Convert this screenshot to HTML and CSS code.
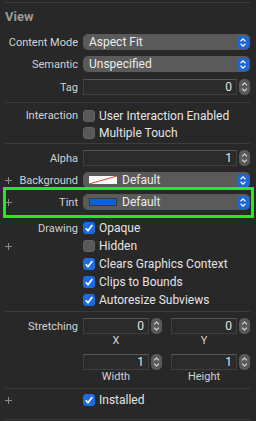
FILE: index.html
```html
<!DOCTYPE html>
<html lang="en">
<head>
  <meta charset="UTF-8">
  <meta name="viewport" content="width=device-width, initial-scale=1.0">
  <title>View Inspector</title>
  <link rel="stylesheet" href="styles.css">
</head>
<body>
  <div class="panel">
    <div class="sep"></div>

    <section class="sec sec-view">
      <div class="title">View</div>
      <div class="stack">
        <div class="row">
          <div class="label">Content Mode</div>
          <div class="popup">
            <span class="popup-text">Aspect Fit</span>
            <span class="popup-arrows"><svg width="12" height="13" viewBox="0 0 12 13"><path d="M3.6 5.2 L6 2.9 L8.4 5.2 M3.6 7.8 L6 10.1 L8.4 7.8" fill="none" stroke="#fff" stroke-width="1.2"/></svg></span>
          </div>
        </div>
        <div class="row">
          <div class="label">Semantic</div>
          <div class="popup">
            <span class="popup-text">Unspecified</span>
            <span class="popup-arrows"><svg width="12" height="13" viewBox="0 0 12 13"><path d="M3.6 5.2 L6 2.9 L8.4 5.2 M3.6 7.8 L6 10.1 L8.4 7.8" fill="none" stroke="#fff" stroke-width="1.2"/></svg></span>
          </div>
        </div>
        <div class="row row-tag">
          <div class="label">Tag</div>
          <div class="field-group">
            <div class="field">0</div>
            <span class="stepper"><svg width="11" height="16" viewBox="0 0 11 16"><path d="M3 6.4 L5.5 4 L8 6.4 M3 9.6 L5.5 12 L8 9.6" fill="none" stroke="#d8d8d8" stroke-width="1.1"/></svg></span>
          </div>
        </div>
      </div>
    </section>

    <div class="sep"></div>

    <section class="sec sec-interaction">
      <div class="row check-row">
        <div class="label">Interaction</div>
        <label class="check"><span class="box"></span>User Interaction Enabled</label>
      </div>
      <div class="row check-row">
        <div class="label"></div>
        <label class="check"><span class="box"></span>Multiple Touch</label>
      </div>
    </section>

    <div class="sep"></div>

    <section class="sec sec-look">
      <div class="stack">
        <div class="row">
          <div class="label">Alpha</div>
          <div class="field-group">
            <div class="field">1</div>
            <span class="stepper"><svg width="11" height="16" viewBox="0 0 11 16"><path d="M3 6.4 L5.5 4 L8 6.4 M3 9.6 L5.5 12 L8 9.6" fill="none" stroke="#d8d8d8" stroke-width="1.1"/></svg></span>
          </div>
        </div>
        <div class="row">
          <div class="label"><span class="plus"><svg width="7" height="7" viewBox="0 0 7 7"><path d="M3.5 0 V7 M0 3.5 H7" stroke="#8c8c8c" stroke-width="1"/></svg></span>Background</div>
          <div class="popup">
            <span class="well well-none"><svg width="28" height="8" viewBox="0 0 28 8"><path d="M0 8 L28 0" stroke="#e8383a" stroke-width="1"/></svg></span>
            <span class="popup-text">Default</span>
            <span class="popup-arrows"><svg width="12" height="13" viewBox="0 0 12 13"><path d="M3.6 5.2 L6 2.9 L8.4 5.2 M3.6 7.8 L6 10.1 L8.4 7.8" fill="none" stroke="#fff" stroke-width="1.2"/></svg></span>
          </div>
        </div>
        <div class="row row-tint">
          <div class="label"><span class="plus"><svg width="7" height="7" viewBox="0 0 7 7"><path d="M3.5 0 V7 M0 3.5 H7" stroke="#8c8c8c" stroke-width="1"/></svg></span>Tint</div>
          <div class="popup">
            <span class="well well-blue"></span>
            <span class="popup-text">Default</span>
            <span class="popup-arrows"><svg width="12" height="13" viewBox="0 0 12 13"><path d="M3.6 5.2 L6 2.9 L8.4 5.2 M3.6 7.8 L6 10.1 L8.4 7.8" fill="none" stroke="#fff" stroke-width="1.2"/></svg></span>
          </div>
          <div class="highlight"></div>
        </div>
      </div>

      <div class="drawing">
        <div class="row draw-row">
          <div class="label">Drawing</div>
          <label class="check"><span class="box on"><svg width="12" height="12" viewBox="0 0 12 12"><path d="M2.8 6.3 L5 8.7 L9.3 2.9" fill="none" stroke="#fff" stroke-width="1.7"/></svg></span>Opaque</label>
        </div>
        <div class="row draw-row">
          <div class="label"><span class="plus"><svg width="7" height="7" viewBox="0 0 7 7"><path d="M3.5 0 V7 M0 3.5 H7" stroke="#8c8c8c" stroke-width="1"/></svg></span></div>
          <label class="check"><span class="box"></span>Hidden</label>
        </div>
        <div class="row draw-row">
          <div class="label"></div>
          <label class="check"><span class="box on"><svg width="12" height="12" viewBox="0 0 12 12"><path d="M2.8 6.3 L5 8.7 L9.3 2.9" fill="none" stroke="#fff" stroke-width="1.7"/></svg></span>Clears Graphics Context</label>
        </div>
        <div class="row draw-row">
          <div class="label"></div>
          <label class="check"><span class="box on"><svg width="12" height="12" viewBox="0 0 12 12"><path d="M2.8 6.3 L5 8.7 L9.3 2.9" fill="none" stroke="#fff" stroke-width="1.7"/></svg></span>Clips to Bounds</label>
        </div>
        <div class="row draw-row">
          <div class="label"></div>
          <label class="check"><span class="box on"><svg width="12" height="12" viewBox="0 0 12 12"><path d="M2.8 6.3 L5 8.7 L9.3 2.9" fill="none" stroke="#fff" stroke-width="1.7"/></svg></span>Autoresize Subviews</label>
        </div>
      </div>
    </section>

    <div class="sep"></div>

    <section class="sec sec-stretch">
      <div class="row">
        <div class="label">Stretching</div>
        <div class="pair">
          <div class="field-group">
            <div class="field">0</div>
            <span class="stepper"><svg width="11" height="16" viewBox="0 0 11 16"><path d="M3 6.4 L5.5 4 L8 6.4 M3 9.6 L5.5 12 L8 9.6" fill="none" stroke="#d8d8d8" stroke-width="1.1"/></svg></span>
          </div>
          <div class="field-group">
            <div class="field">0</div>
            <span class="stepper"><svg width="11" height="16" viewBox="0 0 11 16"><path d="M3 6.4 L5.5 4 L8 6.4 M3 9.6 L5.5 12 L8 9.6" fill="none" stroke="#d8d8d8" stroke-width="1.1"/></svg></span>
          </div>
        </div>
      </div>
      <div class="row caption-row">
        <div class="label"></div>
        <div class="pair">
          <div class="caption">X</div>
          <div class="caption">Y</div>
        </div>
      </div>
      <div class="row row-size">
        <div class="label"></div>
        <div class="pair">
          <div class="field-group">
            <div class="field">1</div>
            <span class="stepper"><svg width="11" height="16" viewBox="0 0 11 16"><path d="M3 6.4 L5.5 4 L8 6.4 M3 9.6 L5.5 12 L8 9.6" fill="none" stroke="#d8d8d8" stroke-width="1.1"/></svg></span>
          </div>
          <div class="field-group">
            <div class="field">1</div>
            <span class="stepper"><svg width="11" height="16" viewBox="0 0 11 16"><path d="M3 6.4 L5.5 4 L8 6.4 M3 9.6 L5.5 12 L8 9.6" fill="none" stroke="#d8d8d8" stroke-width="1.1"/></svg></span>
          </div>
        </div>
      </div>
      <div class="row caption-row">
        <div class="label"></div>
        <div class="pair">
          <div class="caption">Width</div>
          <div class="caption">Height</div>
        </div>
      </div>
    </section>

    <div class="sep"></div>

    <section class="sec sec-installed">
      <div class="row draw-row">
        <div class="label"><span class="plus"><svg width="7" height="7" viewBox="0 0 7 7"><path d="M3.5 0 V7 M0 3.5 H7" stroke="#8c8c8c" stroke-width="1"/></svg></span></div>
        <label class="check"><span class="box on"><svg width="12" height="12" viewBox="0 0 12 12"><path d="M2.8 6.3 L5 8.7 L9.3 2.9" fill="none" stroke="#fff" stroke-width="1.7"/></svg></span>Installed</label>
      </div>
    </section>

    <div class="sep"></div>
  </div>
</body>
</html>
```

FILE: styles.css
```css
body {
  margin: 0;
  background-color: #282828;
  font-family: Roboto, 'Noto Sans', sans-serif;
  font-size: 11px;
  color: #d6d6d6;
}
.panel {
  width: 256px;
  height: 421px;
  box-sizing: border-box;
  padding: 2px 6px 0 5px;
  overflow: hidden;
}
.sep {
  height: 1px;
  background-color: #3c3c3c;
}
.title {
  height: 27px;
  margin-bottom: 4px;
  display: flex;
  align-items: center;
  font-size: 13px;
  font-weight: 700;
  color: #9a9a9a;
}
.stack {
  display: flex;
  flex-direction: column;
  gap: 6px;
}
.sec-view {
  padding-bottom: 7px;
}
.row-tag {
  margin-top: 1px;
}
.sec-interaction {
  padding: 4px 0 2px;
}
.sec-look {
  padding: 6px 0 2px;
}
.sec-stretch {
  padding: 6px 0 6px;
}
.sec-installed {
  padding: 2px 0 10px;
}
.row {
  display: grid;
  grid-template-columns: 73px 1fr;
  column-gap: 5px;
  align-items: center;
  height: 16px;
}
.check-row {
  height: 17px;
}
.draw-row {
  height: 18px;
}
.drawing {
  margin-top: 9px;
}
.label {
  display: flex;
  align-items: center;
  justify-content: flex-end;
  white-space: nowrap;
  color: #d2d2d2;
}
.plus {
  display: flex;
  margin-right: auto;
}

/* popup buttons */
.popup {
  height: 16px;
  display: flex;
  align-items: center;
  padding: 0 1px 0 6px;
  border-radius: 5px;
  background-color: #5a5a5a;
  color: #ececec;
  font-size: 12px;
}
.popup-text {
  white-space: nowrap;
}
.popup-arrows {
  display: flex;
  margin-left: auto;
  width: 12px;
  height: 13px;
  border-radius: 4px;
  background-color: #1f67d9;
}
.well {
  display: flex;
  width: 28px;
  height: 8px;
  margin-right: 5px;
  box-sizing: border-box;
}
.well-none {
  background-color: #fafafa;
}
.well-blue {
  background-color: #0b63d3;
  border: 1px solid #3a3a3a;
}

/* text fields */
.field-group {
  display: flex;
  align-items: center;
  gap: 2px;
}
.field {
  flex: 1;
  height: 16px;
  box-sizing: border-box;
  padding-right: 4px;
  border: 1px solid #3f3f3f;
  border-top-color: #565656;
  background-color: #2b2b2b;
  color: #e4e4e4;
  font-size: 12px;
  line-height: 14px;
  text-align: right;
}
.stepper {
  display: flex;
  width: 11px;
  height: 16px;
  border-radius: 5px;
  background-color: #5a5a5a;
}
.pair {
  display: grid;
  grid-template-columns: 1fr 1fr;
  column-gap: 9px;
}
.caption-row {
  height: 12px;
}
.row-size {
  margin-top: 8px;
}
.caption {
  padding-right: 13px;
  text-align: center;
  color: #d2d2d2;
}

/* checkboxes */
.check {
  display: flex;
  align-items: center;
  gap: 4px;
  color: #e4e4e4;
  font-size: 12px;
  white-space: nowrap;
}
.box {
  display: flex;
  width: 12px;
  height: 12px;
  box-sizing: border-box;
  border-radius: 3px;
  background-color: #585858;
  border: 1px solid #626262;
}
.box.on {
  background-color: #1d6be0;
  border: none;
}

/* hand drawn marker round the tint row */
.row-tint {
  position: relative;
}
.highlight {
  position: absolute;
  top: -7px;
  bottom: -8px;
  left: -2px;
  right: -4px;
  border: 3px solid #21ec21;
}
```
